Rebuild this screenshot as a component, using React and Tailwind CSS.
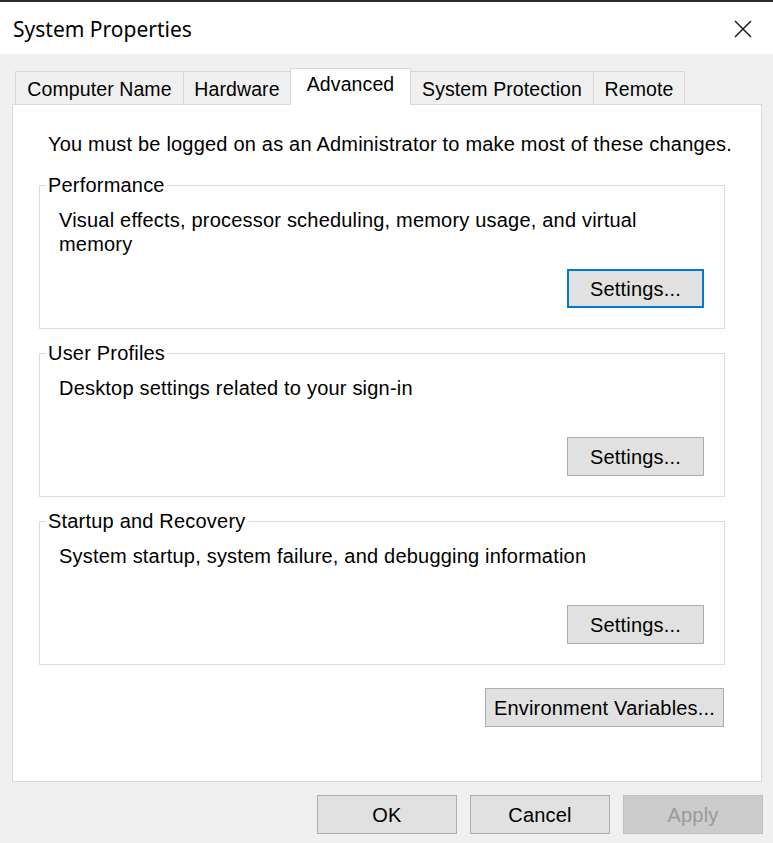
import React from "react";

const sans = "font-['Liberation_Sans',Arial,sans-serif]";

function Tab({ label, className }) {
  return (
    <div
      className={
        "-ml-px first:ml-0 h-[33px] pt-[3px] flex items-center justify-center border-t border-l border-r border-[#d9d9d9] bg-[#f0f0f0] text-[19.5px] tracking-[0.1px] text-black " +
        className
      }
    >
      {label}
    </div>
  );
}

function GroupBox({ title, text, focused, className }) {
  return (
    <fieldset className={"border border-[#dcdcdc] w-[686px] " + className}>
      <legend className="ml-[6px] px-[2px] leading-[22px] text-[20px] tracking-[0.2px]">{title}</legend>
      <div className="pl-[19px] pr-[20px] pb-[20px]">
        <div className="mt-[12px] h-[48px] leading-[24px] text-[20px] tracking-[0.2px]">{text}</div>
        <div className="mt-[13px] flex justify-end">
          {focused ? (
            <button className="w-[137px] h-[39px] border-2 border-[#0078d7] bg-[#e1e1e1] text-[20px] tracking-[0.2px] text-black flex items-center justify-center">
              Settings...
            </button>
          ) : (
            <button className="w-[137px] h-[39px] border border-[#adadad] bg-[#e1e1e1] text-[20px] tracking-[0.2px] text-black flex items-center justify-center">
              Settings...
            </button>
          )}
        </div>
      </div>
    </fieldset>
  );
}

export default function App() {
  return (
    <div className={"w-[773px] h-[843px] bg-[#f0f0f0] flex flex-col overflow-hidden " + sans}>
      <div className="h-[2px] bg-[#2b2b2b]" />
      <div className="h-[52px] bg-white flex items-center justify-between pl-[13px] pr-[21px]">
        <span className="pt-[3px] font-['Noto_Sans','Open_Sans',sans-serif] text-[21px] text-black">System Properties</span>
        <svg width="18" height="18" viewBox="0 0 18 18" className="mt-[2px]">
          <path d="M1 1L17 17M17 1L1 17" stroke="#111" strokeWidth="1.4" fill="none" />
        </svg>
      </div>

      <div className="mt-[14px] ml-[15px] h-[36px] flex items-end">
        <Tab label="Computer Name" className="w-[169px]" />
        <Tab label="Hardware" className="w-[108px]" />
        <div className="-ml-px relative z-10 -mb-px w-[121px] h-[37px] pb-[4px] flex items-center justify-center border-t border-l border-r border-[#d9d9d9] bg-white text-[19.5px] tracking-[0.1px] text-black">
          Advanced
        </div>
        <Tab label="System Protection" className="w-[184px]" />
        <Tab label="Remote" className="w-[92px]" />
      </div>

      <div className="ml-[12px] w-[750px] h-[678px] bg-white border border-[#d9d9d9] pt-[27px] pl-[26px] text-black">
        <div className="pl-[9px] leading-[24px] text-[20px] tracking-[0.2px]">
          You must be logged on as an Administrator to make most of these changes.
        </div>
        <GroupBox
          className="mt-[18px]"
          title="Performance"
          focused
          text={
            <>
              Visual effects, processor scheduling, memory usage, and virtual
              <br />
              memory
            </>
          }
        />
        <GroupBox className="mt-[13px]" title="User Profiles" text="Desktop settings related to your sign-in" />
        <GroupBox
          className="mt-[13px]"
          title="Startup and Recovery"
          text="System startup, system failure, and debugging information"
        />
        <div className="w-[685px] mt-[23px] flex justify-end">
          <button className="w-[239px] h-[39px] border border-[#adadad] bg-[#e1e1e1] text-[20px] tracking-[0.2px] text-black flex items-center justify-center">
            Environment Variables...
          </button>
        </div>
      </div>

      <div className="mt-[13px] pr-[10px] flex justify-end gap-[13px]">
        <button className="w-[140px] h-[39px] border border-[#adadad] bg-[#e1e1e1] text-[20px] tracking-[0.2px] text-black flex items-center justify-center">
          OK
        </button>
        <button className="w-[140px] h-[39px] border border-[#adadad] bg-[#e1e1e1] text-[20px] tracking-[0.2px] text-black flex items-center justify-center">
          Cancel
        </button>
        <button className="w-[140px] h-[39px] border border-[#bfbfbf] bg-[#cccccc] text-[20px] tracking-[0.2px] text-[#9a9a9a] flex items-center justify-center">
          Apply
        </button>
      </div>
    </div>
  );
}
